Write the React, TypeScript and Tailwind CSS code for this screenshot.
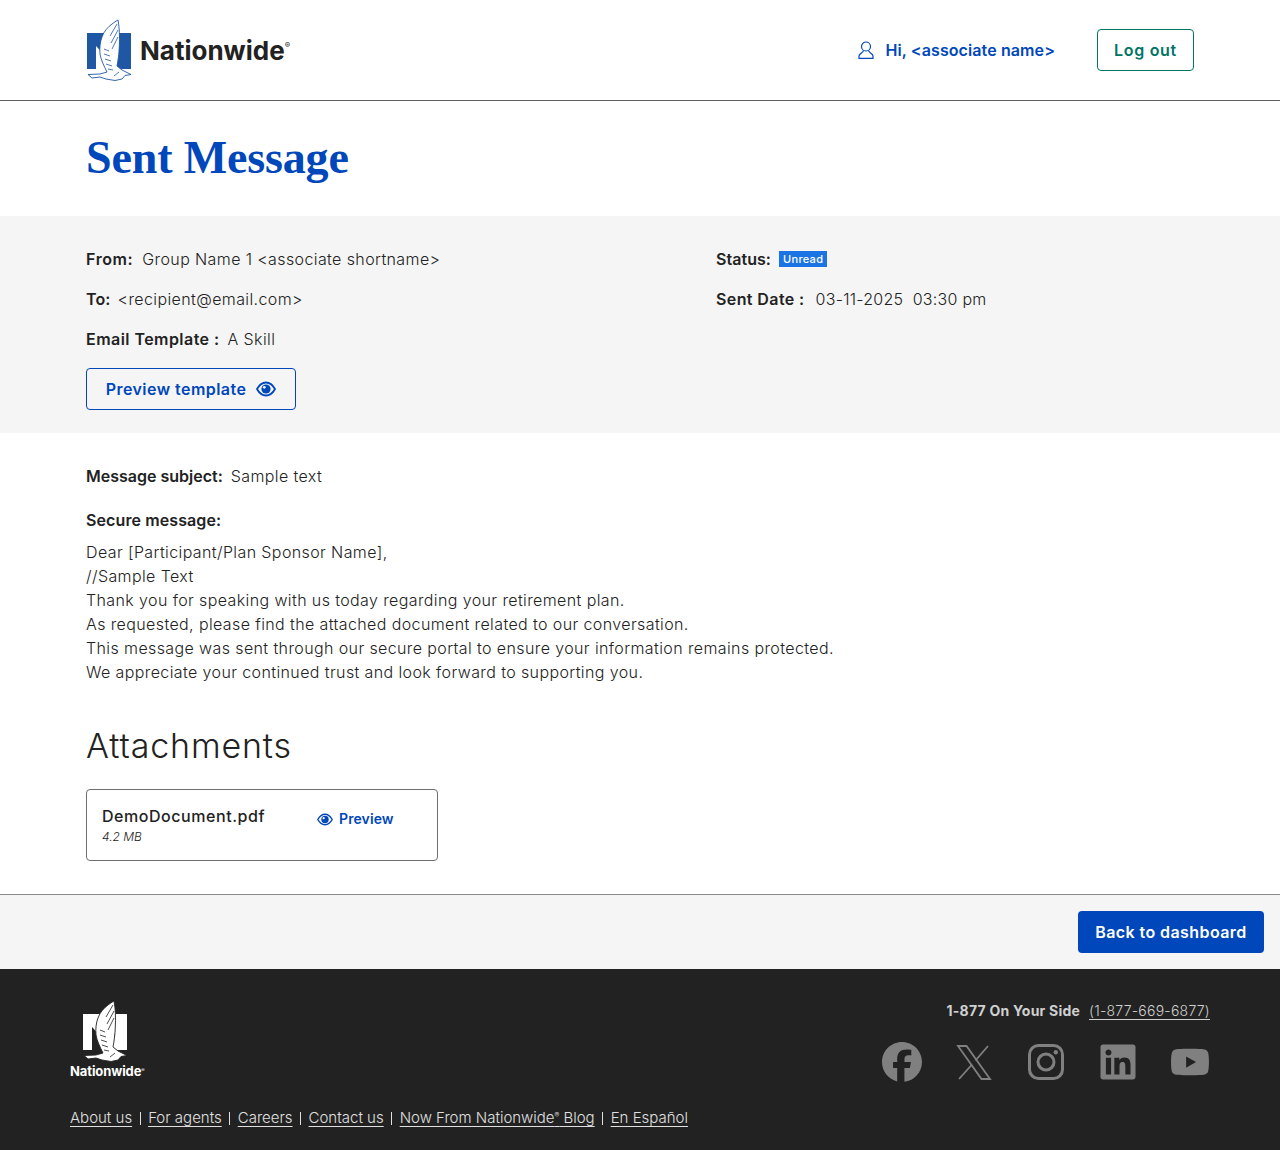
import { FaFacebook, FaLinkedin, FaYoutube } from 'react-icons/fa6'

function EagleMark({ fill, wing, line }: { fill: string; wing: string; line: string }) {
  return (
    <svg viewBox="0 0 46 62" className="w-full h-full" fill="none">
      {/* the N */}
      <path d="M1 14H19L33 38V14H45V50H31L10 27V50H1Z" fill={fill} />
      {/* wing and body */}
      <path
        d="M32 1C33.500 9 33.800 18 33.300 27C33 35 32 42 31 47L36 51L40 53L45 55.500L39 56.500L36 60L29 61.500L20 60L14 58L6 59L2 55.500L14 55L21 53C18 47 15 41 14 35C13.500 29 14 23 16 18C18 12 22 8 26 5C28 3.500 30 2 32 1Z"
        fill={wing}
        stroke={line}
        strokeWidth="0.9"
        strokeLinejoin="round"
      />
      <path
        d="M31 5L24 17M32 11L25 24M32 18L26 30M18 30L23 32M18 35L24 37M19 40L25 42M20 45L26 47M22 50L27 51M33 53L28 57"
        stroke={line}
        strokeWidth="0.8"
      />
    </svg>
  )
}

function EyeIcon({ className, bg }: { className: string; bg: string }) {
  return (
    <svg viewBox="0 0 20 16" className={className} fill="none">
      <path d="M1 8C3.500 3.500 6.500 1.500 10 1.500C13.500 1.500 16.500 3.500 19 8C16.500 12.500 13.500 14.500 10 14.500C6.500 14.500 3.500 12.500 1 8Z" stroke="currentColor" strokeWidth="1.800" strokeLinejoin="round" />
      <circle cx="10" cy="8" r="4.600" fill="currentColor" />
      <circle cx="8.300" cy="6.300" r="1.400" fill={bg} />
    </svg>
  )
}

function XLogo() {
  return (
    <svg viewBox="0 0 40 40" className="w-10 h-10" fill="none" stroke="currentColor" strokeWidth="1.800">
      <path d="M4 4H12.500L36 37H27.500Z" strokeLinejoin="miter" />
      <path d="M34 4L21.500 18.500M18 22.500L5 37" />
    </svg>
  )
}

function InstagramLogo() {
  return (
    <svg viewBox="0 0 40 40" className="w-10 h-10" fill="none" stroke="currentColor" strokeWidth="3">
      <rect x="3.500" y="3.500" width="33" height="33" rx="9" />
      <circle cx="20" cy="20" r="8" />
      <circle cx="29.800" cy="10.200" r="2.200" fill="currentColor" stroke="none" />
    </svg>
  )
}

const footerLinks = ['About us', 'For agents', 'Careers', 'Contact us', 'Now From Nationwide', 'En Español']

const messageLines = [
  'Dear [Participant/Plan Sponsor Name],',
  '//Sample Text',
  'Thank you for speaking with us today regarding your retirement plan.',
  'As requested, please find the attached document related to our conversation.',
  'This message was sent through our secure portal to ensure your information remains protected.',
  'We appreciate your continued trust and look forward to supporting you.',
]

export default function App() {
  return (
    <div className="w-[1280px] h-[1150px] bg-white text-[16px] leading-6 font-[350] tracking-[0.39px] text-[#222222] font-['Inter',sans-serif] flex flex-col overflow-hidden">
      {/* header */}
      <header className="h-[101px] shrink-0 border-b border-[#5e5e5e] px-[86px] flex items-center justify-between">
        <div className="flex items-center gap-[8px]">
          <div className="w-[46px] h-[62px]">
            <EagleMark fill="#1f57a4" wing="#ffffff" line="#1f57a4" />
          </div>
          <span className="font-['Inter',sans-serif] font-bold text-[26px] tracking-[0px] text-[#222222] mt-[2px]">
            Nationwide<sup className="text-[8px] font-normal -top-[12px]">®</sup>
          </span>
        </div>
        <div className="flex items-center">
          <svg viewBox="0 0 16 18" className="w-4 h-[18px] text-[#0047bb]" fill="none" stroke="currentColor" strokeWidth="1.200">
            <circle cx="8" cy="5.500" r="4.500" />
            <path d="M5.500 9.500C5.500 11.500 1 12.500 1 15V17.400H15V15C15 12.500 10.500 11.500 10.500 9.500" />
          </svg>
          <span className="ml-3 font-semibold tracking-[0.1px] text-[#0047bb]">Hi, &lt;associate name&gt;</span>
          <button className="ml-[42px] w-[97px] h-[42px] rounded border border-[#007565] text-[#007565] font-semibold tracking-[0.7px]">Log out</button>
        </div>
      </header>

      <h1 className="h-[115px] shrink-0 pl-[86px] pt-[29px] font-['Liberation_Serif',serif] font-bold text-[46px] leading-[56px] tracking-[-0.15px] text-[#0047bb]">
        Sent Message
      </h1>

      {/* message details */}
      <section className="h-[217px] shrink-0 bg-[#f5f5f5] px-[86px] pt-[31px] flex">
        <div className="w-[630px] flex flex-col gap-4">
          <div className="flex gap-[9px]">
            <span className="font-semibold tracking-[0.6px]">From:</span>
            <span>Group Name 1 &lt;associate shortname&gt;</span>
          </div>
          <div className="flex gap-[7px]">
            <span className="font-semibold tracking-[0.15px]">To:</span>
            <span>&lt;recipient@email.com&gt;</span>
          </div>
          <div className="flex gap-[8px]">
            <span className="font-semibold tracking-[0.45px]">Email Template :</span>
            <span>A Skill</span>
          </div>
          <button className="mt-[1px] pb-[1px] w-[210px] h-[42px] rounded border border-[#0047bb] text-[#0047bb] font-semibold tracking-[0.45px] flex items-center justify-center gap-[10px]">
            Preview template
            <EyeIcon className="w-5 h-4" bg="#f5f5f5" />
          </button>
        </div>
        <div className="flex flex-col gap-4">
          <div className="flex items-center gap-2">
            <span className="font-semibold tracking-[0.05px]">Status:</span>
            <span className="bg-[#1b74e4] text-white text-[11px] leading-4 font-medium tracking-[0.3px] px-1">Unread</span>
          </div>
          <div className="flex gap-[11px]">
            <span className="font-semibold tracking-[0.4px]">Sent Date :</span>
            <span className="tracking-[0.25px]">03-11-2025&nbsp; 03:30 pm</span>
          </div>
        </div>
      </section>

      {/* message body */}
      <section className="h-[462px] shrink-0 border-b border-[#8a8a8a] px-[86px] pt-[31px]">
        <div className="flex gap-2">
          <span className="font-semibold tracking-[0px]">Message subject:</span>
          <span>Sample text</span>
        </div>
        <div className="mt-5 font-semibold tracking-[0.1px]">Secure message:</div>
        <div className="mt-2">
          {messageLines.map((line) => (
            <p key={line}>{line}</p>
          ))}
        </div>
        <h2 className="mt-[42px] text-[34px] leading-10 font-light tracking-[0.85px]">Attachments</h2>
        <div className="mt-[23px] w-[352px] h-[72px] rounded border border-[#6f6f6f] pl-[15px] pt-[14px] flex">
          <div className="w-[215px]">
            <div className="font-medium tracking-[0.55px]">DemoDocument.pdf</div>
            <div className="mt-[1px] text-[12px] leading-4 italic font-light tracking-normal">4.2 MB</div>
          </div>
          <div className="h-6 flex items-center gap-[6px] text-[#0047bb] text-[14px] font-semibold tracking-[0.1px] mt-[3px]">
            <EyeIcon className="w-4 h-[13px]" bg="#ffffff" />
            Preview
          </div>
        </div>
      </section>

      <div className="h-[74px] shrink-0 bg-[#f5f5f5] pr-4 flex items-center justify-end">
        <button className="pb-[1px] w-[186px] h-[42px] rounded bg-[#0047bb] text-white font-semibold tracking-[0.42px]">Back to dashboard</button>
      </div>

      {/* footer */}
      <footer className="flex-1 bg-[#222222] px-[70px] flex flex-col tracking-normal">
        <div className="flex justify-between">
          <div className="w-[76px] pt-[31px] flex flex-col">
            <div className="ml-[12px] w-[46px] h-[62px]">
              <EagleMark fill="#ffffff" wing="#ffffff" line="#222222" />
            </div>
            <span className="mt-[1px] font-['Inter',sans-serif] font-bold text-[13px] leading-4 tracking-[-0.1px] text-white whitespace-nowrap">
              Nationwide<sup className="text-[5px] font-normal -top-[4px]">®</sup>
            </span>
          </div>
          <div className="pt-[30px] flex flex-col items-end">
            <div className="text-[14px] leading-6 text-[#d0d0d0]">
              <span className="font-bold tracking-[0.22px]">1-877 On Your Side</span>
              <a className="ml-[9px] underline font-light tracking-[0.25px] underline-offset-[3px]">(1-877-669-6877)</a>
            </div>
            <div className="mt-[19px] flex gap-8 text-[#808080]">
              <FaFacebook className="w-10 h-10" />
              <XLogo />
              <InstagramLogo />
              <FaLinkedin className="w-10 h-10" />
              <FaYoutube className="w-10 h-10" />
            </div>
          </div>
        </div>
        <nav className="mt-[26px] flex items-center text-[15px] leading-5 text-[#e0e0e0] font-light">
          {footerLinks.map((link, i) => (
            <span key={link} className="flex items-center">
              {i > 0 && <span className="mx-[7.500px] w-px h-[13px] bg-[#e0e0e0]" />}
              {link === 'Now From Nationwide' ? (
                <a className="underline underline-offset-[3px]">
                  {link}
                  <sup className="text-[7px] -top-[5px]">®</sup> Blog
                </a>
              ) : (
                <a className="underline underline-offset-[3px]">{link}</a>
              )}
            </span>
          ))}
        </nav>
      </footer>
    </div>
  )
}
